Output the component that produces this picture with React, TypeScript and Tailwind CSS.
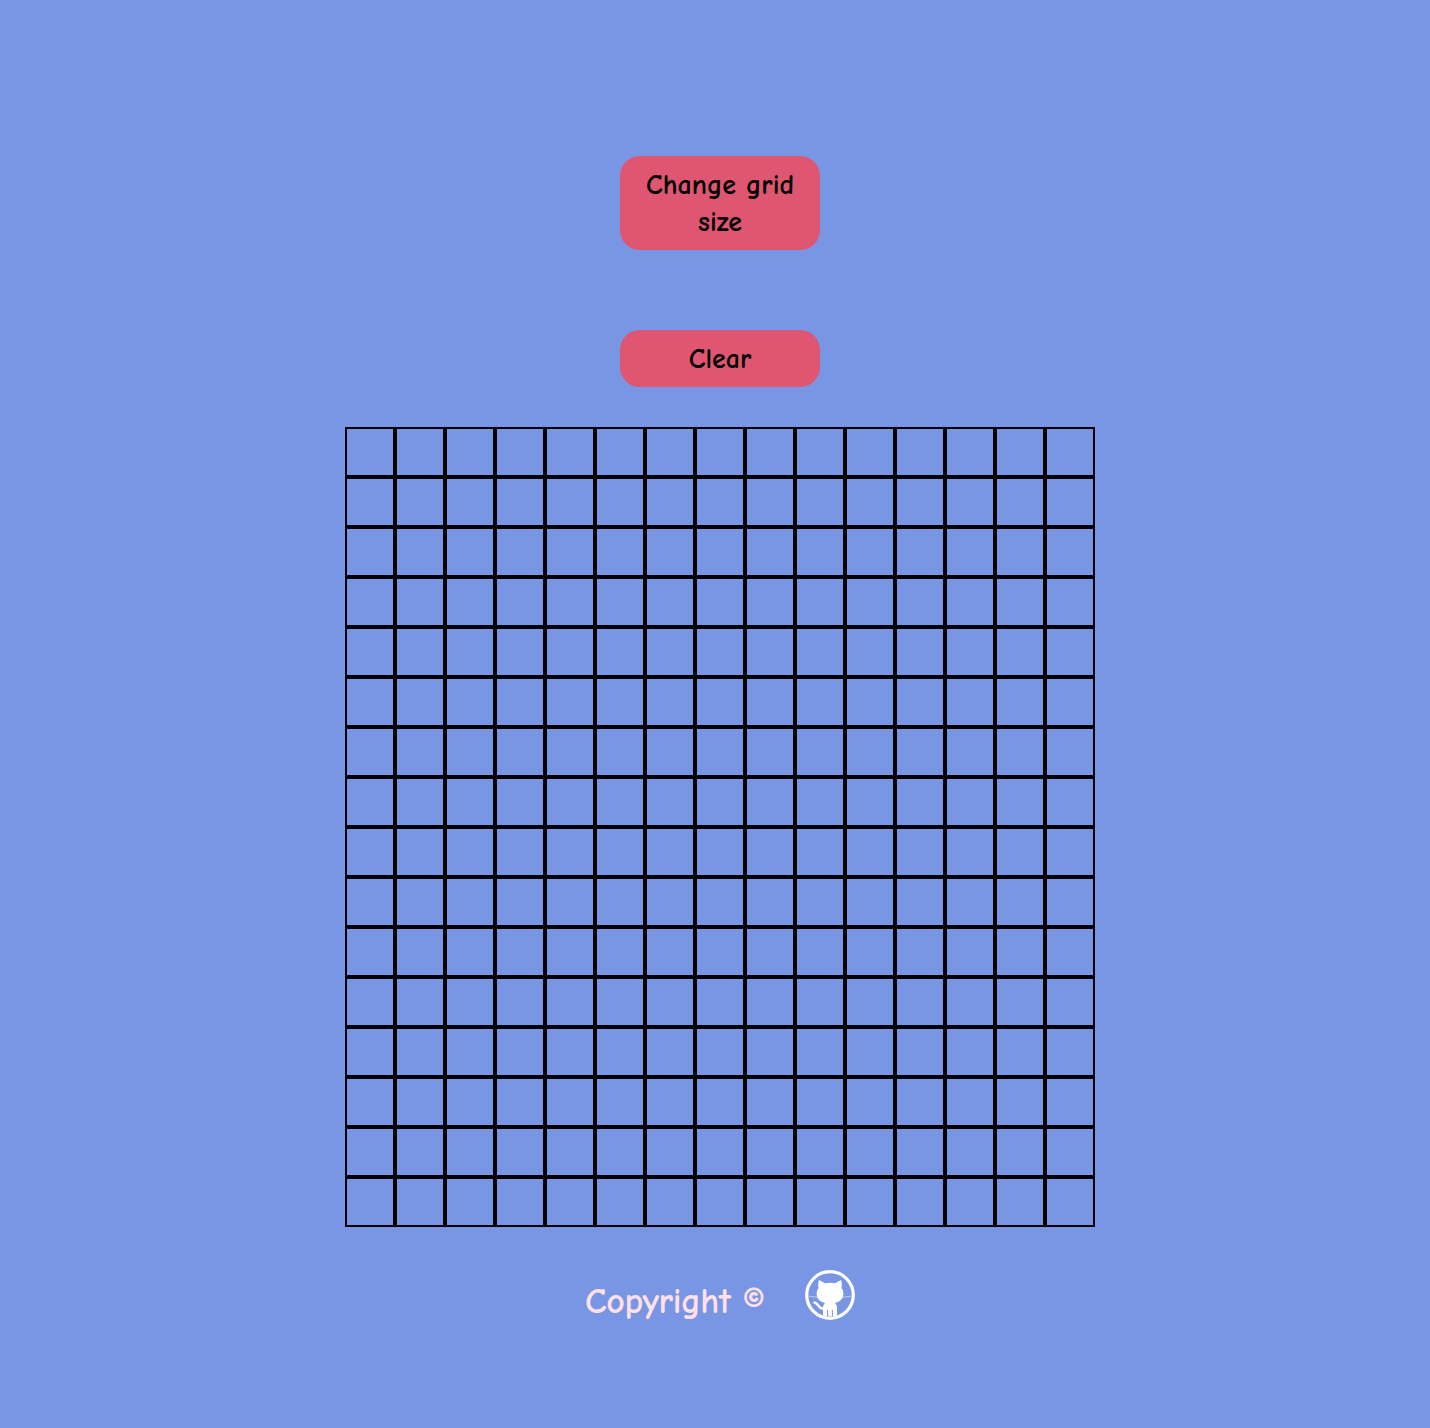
const cells = Array.from({ length: 15 * 16 }, (_, i) => i);

function GithubCat() {
  return (
    <svg viewBox="0 0 50 50" className="ml-10 block h-[50px] w-[50px]" aria-label="GitHub">
      <circle cx="25" cy="25" r="23.3" fill="none" stroke="#fff" strokeWidth="3.2" />
      <path
        fill="#fff"
        d="M14 10 L20 13.2 C23 12.5 27 12.5 30 13.2 L36 10 C37 13 37 16 36.5 18 C38.6 20.5 39 24 37.6 27.5 C36 31 32 32.5 30 33 C31.5 34.5 32 36 32 38 L32 45.5 C27 46.8 23 46.8 18 45.5 L18 38 C18 36 18.5 34.5 20 33 C18 32.5 14 31 12.4 27.5 C11 24 11.4 20.5 13.5 18 C13 16 13 13 14 10Z"
      />
      <path d="M9.5 32.5 C13.5 33 13 38.8 18.5 38.8" fill="none" stroke="#fff" strokeWidth="2.6" strokeLinecap="round" />
      <path d="M4 26.2 L13 27.4 M37 27.4 L46 26.2" fill="none" stroke="#fff" strokeWidth="0.8" opacity="0.65" />
      <path d="M22.6 40 V46.5 M27.4 40 V46.5" fill="none" stroke="#7996e4" strokeWidth="1" />
    </svg>
  );
}

export default function App() {
  return (
    <div className="flex min-h-[1428px] flex-col items-center bg-[#7996e4] pl-[10px] pt-[156px] font-['Comic_Sans_MS','Comic_Neue','Lato',sans-serif] font-bold">
      <button className="w-[200px] rounded-[20px] bg-[#de5671] px-6 pb-[9px] pt-[11px] text-center text-[28px] font-bold leading-[37px] text-black">
        Change grid size
      </button>
      <button className="mt-20 w-[200px] rounded-[20px] bg-[#de5671] px-6 pb-[9px] pt-[11px] text-center text-[28px] font-bold leading-[37px] text-black">
        Clear
      </button>
      <div className="mt-10 grid w-[750px] grid-cols-[repeat(15,50px)] grid-rows-[repeat(16,50px)]">
        {cells.map((i) => (
          <div key={i} className="h-[50px] w-[50px] border-2 border-black" />
        ))}
      </div>
      <footer className="mt-[43px] flex items-start">
        <p className="mt-[10px] w-[180px] whitespace-nowrap text-[36px] leading-[44px] tracking-[-0.4px] text-[#ffe0e6]">Copyright ©</p>
        <GithubCat />
      </footer>
    </div>
  );
}
